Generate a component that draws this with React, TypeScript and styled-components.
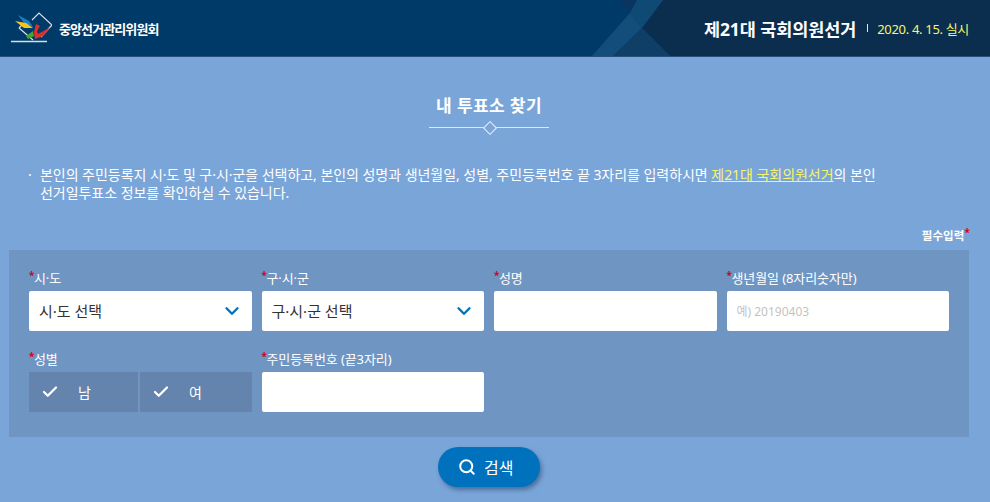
import React from "react";
import styled, { createGlobalStyle } from "styled-components";
import { ChevronDown, Check, Search } from "lucide-react";

const color = {
  page: "#7aa5d9",
  panel: "#6f95c2",
  navy: "#003a68",
  navyDark: "#0b2e4f",
  toggle: "#6484ae",
  accent: "#0071bc",
  star: "#d3001c",
  yellow: "#f7f56a",
};

const fontStack = `"Noto Sans", "Noto Sans CJK KR", sans-serif`;

const GlobalStyle = createGlobalStyle`
  html, body {
    margin: 0;
    padding: 0;
    background: ${color.page};
  }
  * {
    box-sizing: border-box;
  }
  body {
    font-family: ${fontStack};
  }
`;

const Page = styled.div`
  width: 990px;
  height: 502px;
  overflow: hidden;
  background: ${color.page};
`;

const Header = styled.header`
  position: relative;
  height: 57px;
  display: flex;
  align-items: center;
  justify-content: space-between;
  padding: 0 21px 0 10px;
  background: ${color.navy};
  border-bottom: 1px solid #29507c;
  overflow: hidden;
`;

const HeaderArt = styled.svg`
  position: absolute;
  top: 0;
  left: 570px;
  width: 420px;
  height: 56px;
`;

const Brand = styled.div`
  position: relative;
  display: flex;
  align-items: center;
  gap: 7px;
  color: #fff;
  font-size: 13px;
  font-weight: 700;
  letter-spacing: -0.9px;
`;

const ElectionInfo = styled.div`
  position: relative;
  display: flex;
  align-items: center;
  color: #fff;
`;

const ElectionName = styled.strong`
  font-size: 17.5px;
  font-weight: 700;
  letter-spacing: -0.1px;
`;

const Divider = styled.span`
  width: 1px;
  height: 8px;
  margin: 0 9px 0 11px;
  background: #dfe6ee;
`;

const ElectionDate = styled.span`
  font-size: 13px;
  color: ${color.yellow};
  letter-spacing: -0.32px;
`;

const TitleBlock = styled.div`
  display: flex;
  flex-direction: column;
  align-items: center;
  padding: 38px 12px 0 0;
`;

const Title = styled.h1`
  margin: 0;
  font-size: 17px;
  line-height: 22px;
  font-weight: 700;
  letter-spacing: 0.4px;
  color: #fff;
`;

const TitleRule = styled.div`
  position: relative;
  width: 120px;
  height: 1px;
  margin-top: 10px;
  background: #dce8f6;

  &::after {
    content: "";
    position: absolute;
    left: 56px;
    top: -4px;
    width: 8px;
    height: 8px;
    transform: rotate(45deg);
    background: ${color.page};
    border: 1px solid #eef4fb;
  }
`;

const Notice = styled.p`
  position: relative;
  margin: 38px 0 0;
  padding-left: 40px;
  width: 900px;
  font-size: 14px;
  line-height: 18px;
  letter-spacing: -0.04px;
  color: #fff;

  &::before {
    content: "·";
    position: absolute;
    left: 28px;
    top: 0;
  }
`;

const NoticeLink = styled.a`
  color: ${color.yellow};
  text-decoration: underline;
`;

const RequiredNote = styled.div`
  margin-top: 21px;
  padding: 0 20px 7px 0;
  height: 27px;
  display: flex;
  justify-content: flex-end;
  align-items: flex-end;
  font-size: 11.5px;
  line-height: 14px;
  font-weight: 700;
  color: #fff;
  letter-spacing: 0.1px;
`;

const Star = styled.i`
  color: ${color.star};
  font-style: normal;
  font-weight: 700;
  font-size: 10px;
  line-height: 1;
`;

const RequiredStar = styled(Star)`
  align-self: flex-start;
  margin-top: 4px;
`;

const Panel = styled.form`
  margin: 0 21px 0 9px;
  height: 187px;
  padding: 20px 20px 0;
  background: ${color.panel};
  display: grid;
  grid-template-columns: repeat(4, 1fr);
  grid-auto-rows: 71px;
  row-gap: 10px;
  column-gap: 10px;
`;

const Field = styled.div`
  display: flex;
  flex-direction: column;
`;

const Label = styled.label`
  position: relative;
  height: 21px;
  padding-left: 5px;
  font-size: 13px;
  line-height: 16px;
  letter-spacing: -0.1px;
  color: #fff;

  ${Star} {
    position: absolute;
    left: 0;
    top: 0;
  }
`;

const SelectBox = styled.div`
  height: 40px;
  display: flex;
  align-items: center;
  justify-content: space-between;
  padding: 0 9px 1px 10px;
  background: #fff;
  border-radius: 2px;
  font-size: 15px;
  color: #333;

  svg {
    color: ${color.accent};
  }
`;

const TextInput = styled.input`
  width: 100%;
  height: 40px;
  padding: 0 10px;
  border: 0;
  border-radius: 2px;
  background: #fff;
  font-family: ${fontStack};
  font-size: 12px;

  &::placeholder {
    color: #c4c4c4;
    opacity: 1;
  }
`;

const ToggleGroup = styled.div`
  display: grid;
  grid-template-columns: 109px 1fr;
  gap: 2px;
  height: 40px;
`;

const Toggle = styled.button`
  display: flex;
  align-items: center;
  padding: 0 0 0 12px;
  border: 0;
  background: ${color.toggle};
  color: #fff;
  font-family: ${fontStack};
  font-size: 14px;

  span {
    margin-left: 19px;
  }
`;

const SearchRow = styled.div`
  display: flex;
  justify-content: center;
  padding: 10px 21px 0 9px;
`;

const SearchButton = styled.button`
  width: 102px;
  height: 40px;
  display: flex;
  align-items: center;
  padding: 0 0 0 20px;
  gap: 8px;
  border: 0;
  border-radius: 20px;
  background: ${color.accent};
  box-shadow: 2px 3px 4px rgba(40, 70, 110, 0.55);
  color: #fff;
  font-family: ${fontStack};
  font-size: 16px;
`;

const LogoMark = () => (
  <svg width="42" height="32" viewBox="0 0 42 32" aria-hidden="true">
    <path d="M22 8 L29 1 L42 13 L31 25 M9 16 L23 28 M9 16 L13 12" fill="none" stroke="#d8dfe6" strokeWidth="1.2" />
    <path d="M1 29.5 H37" stroke="#d8dfe6" strokeWidth="1.4" />
    <path d="M8 3 L19 9 L23 15 L14 11 Z" fill="#1a7fc8" />
    <path d="M5 9 L16 11 L23 16 L14 16 Z" fill="#f5c51c" />
    <path d="M16 24 L23 19 L24 24 L18 27 Z" fill="#3fa535" />
    <path d="M26 12 L30 14 L27 19 L28 22 L41 15 L33 24 L25 27 L24 20 Z" fill="#e32d2a" />
  </svg>
);

const Required = () => <Star>*</Star>;

export default function App() {
  return (
    <Page>
      <GlobalStyle />
      <Header>
        <HeaderArt viewBox="0 0 420 56" aria-hidden="true">
          <path d="M93 0 H420 V56 H100 L72 28 Z" fill="#0b2e4f" />
          <path d="M50 0 H67 L60 13 Z" fill="#0a3560" />
          <path d="M22 56 L60 13 L72 28 L43 56 Z" fill="#124d7c" />
          <path d="M60 13 L67 0 H93 L72 28 Z" fill="#0f4a75" />
          <path d="M72 28 L43 56 H100 Z" fill="#0f3f66" />
        </HeaderArt>
        <Brand>
          <LogoMark />
          중앙선거관리위원회
        </Brand>
        <ElectionInfo>
          <ElectionName>제21대 국회의원선거</ElectionName>
          <Divider />
          <ElectionDate>2020. 4. 15. 실시</ElectionDate>
        </ElectionInfo>
      </Header>

      <TitleBlock>
        <Title>내 투표소 찾기</Title>
        <TitleRule />
      </TitleBlock>

      <Notice>
        본인의 주민등록지 시·도 및 구·시·군을 선택하고, 본인의 성명과 생년월일, 성별, 주민등록번호 끝 3자리를 입력하시면{" "}
        <NoticeLink href="#">제21대 국회의원선거</NoticeLink>의 본인
        <br />
        선거일투표소 정보를 확인하실 수 있습니다.
      </Notice>

      <RequiredNote>
        필수입력
        <RequiredStar>*</RequiredStar>
      </RequiredNote>

      <Panel>
        <Field>
          <Label><Required />시·도</Label>
          <SelectBox>
            시·도 선택
            <ChevronDown size={22} strokeWidth={2.6} />
          </SelectBox>
        </Field>
        <Field>
          <Label><Required />구·시·군</Label>
          <SelectBox>
            구·시·군 선택
            <ChevronDown size={22} strokeWidth={2.6} />
          </SelectBox>
        </Field>
        <Field>
          <Label><Required />성명</Label>
          <TextInput />
        </Field>
        <Field>
          <Label><Required />생년월일 (8자리숫자만)</Label>
          <TextInput placeholder="예) 20190403" />
        </Field>
        <Field>
          <Label><Required />성별</Label>
          <ToggleGroup>
            <Toggle type="button">
              <Check size={18} strokeWidth={3} />
              <span>남</span>
            </Toggle>
            <Toggle type="button">
              <Check size={18} strokeWidth={3} />
              <span>여</span>
            </Toggle>
          </ToggleGroup>
        </Field>
        <Field>
          <Label><Required />주민등록번호 (끝3자리)</Label>
          <TextInput />
        </Field>
      </Panel>

      <SearchRow>
        <SearchButton type="button">
          <Search size={18} strokeWidth={2.6} />
          검색
        </SearchButton>
      </SearchRow>
    </Page>
  );
}
